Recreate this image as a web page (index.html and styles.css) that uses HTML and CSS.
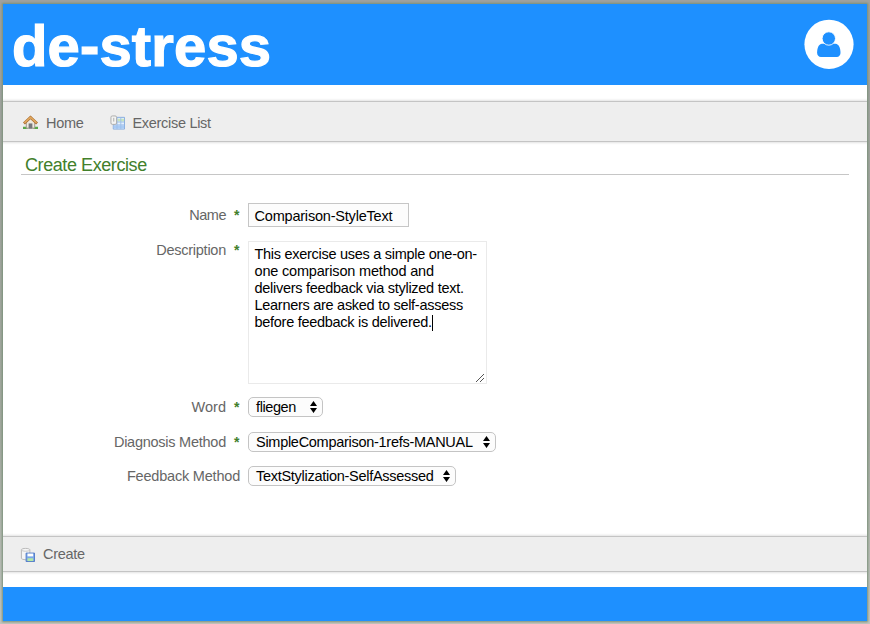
FILE: index.html
```html
<!DOCTYPE html>
<html lang="en">
<head>
<meta charset="utf-8">
<title>de-stress</title>
<link rel="stylesheet" href="styles.css">
</head>
<body>
<div class="page">
  <header class="banner">
    <h1 class="brand">de-stress</h1>
    <svg class="avatar" viewBox="0 0 50 50"><circle cx="25" cy="25.300" r="24.600" fill="#fff"/><path fill="#1e90ff" d="M18 24.700h13.500c3.500.3 5 4.500 5 9.300 0 2.300-1.600 4-3.700 4H16.900c-2.200 0-3.800-1.700-3.800-4 0-4.800 1.400-9 4.900-9.300z"/><circle cx="24.800" cy="19.500" r="6.700" fill="#1e90ff" stroke="#fff" stroke-width=".9"/></svg>
  </header>
  <nav class="bar">
    <a class="item home"><svg class="icon" viewBox="0 0 16 16"><path fill="#55a848" d="M0 12.500h5V15H0zM11 12.500h5V15h-5z"/><path fill="#eee9df" stroke="#9c9488" d="M3.500 8L8 4l4.500 4v6h-9z"/><path fill="#77777b" d="M6 9h4v5.500H6z"/><path fill="none" stroke="#a86a2c" stroke-width="3" d="M1 9l7-6.500L15 9"/><path fill="none" stroke="#e0a75e" stroke-width="1.800" d="M1.500 8.500L8 2.500l6.500 6"/></svg><span>Home</span></a>
    <a class="item list"><svg class="icon" viewBox="0 0 16 16"><path fill="#e5f0ff" stroke="#82aadd" d="M3.500 2.500h12v12.500h-12z"/><path fill="#a9cbf5" d="M4 11h11v3.500H4z"/><path fill="#c9e5bd" d="M8 4h7v3H8z"/><path stroke="#9dbfe9" d="M4 7.500h11M4 10.500h11M7.500 3v12M11.500 3v12"/><rect x="1" y="1" width="6" height="9" rx="1.500" fill="#f4f4f2" stroke="#aaa"/><path stroke="#aaa" d="M4 3v4"/></svg><span>Exercise List</span></a>
  </nav>
  <main class="content">
    <h2 class="heading"><span>Create Exercise</span></h2>
    <form class="form">
      <div class="row name"><label><span class="l1">Name</span><b>*</b></label><div class="input"><span>Comparison-StyleText</span></div></div>
      <div class="row desc"><label><span class="l2">Description</span><b>*</b></label><div class="area"><span class="t1">This exercise uses a simple one-on-</span><br><span class="t2">one comparison method and</span><br><span class="t3">delivers feedback via stylized text.</span><br><span class="t4">Learners are asked to self-assess</span><br><span class="t5">before feedback is delivered.</span><i class="caret"></i><svg class="grip" viewBox="0 0 8 8"><path stroke="#555" d="M0 8L8 0M4 8l4-4"/></svg></div></div>
      <div class="row word"><label><span class="l3">Word</span><b>*</b></label><div class="select s1"><span>fliegen</span><svg class="arrows" viewBox="0 0 7 12"><path d="M3.500 0L7 5H0zM0 7h7l-3.500 5z"/></svg></div></div>
      <div class="row diagnosis"><label><span class="l4">Diagnosis Method</span><b>*</b></label><div class="select s2"><span>SimpleComparison-1refs-MANUAL</span><svg class="arrows" viewBox="0 0 7 12"><path d="M3.500 0L7 5H0zM0 7h7l-3.500 5z"/></svg></div></div>
      <div class="row feedback"><label><span class="l5">Feedback Method</span></label><div class="select s3"><span>TextStylization-SelfAssessed</span><svg class="arrows" viewBox="0 0 7 12"><path d="M3.500 0L7 5H0zM0 7h7l-3.500 5z"/></svg></div></div>
    </form>
  </main>
  <div class="bar actions">
    <a class="item create"><svg class="icon" viewBox="0 0 16 16"><path fill="#f5f5f5" stroke="#b5b5b5" d="M1.500 3c0-2 9-2 9 0v9c0 2-9 2-9 0z"/><path fill="none" stroke="#c5c5c5" d="M1.500 3c0 2 9 2 9 0"/><path fill="#7ba6e8" stroke="#4f79c5" d="M6.500 6.500h9v9h-9z"/><path fill="#fff" d="M8 7h6v3H8z"/><path fill="#b5e8a5" d="M8 12h6v3H8z"/></svg><span>Create</span></a>
  </div>
  <footer class="footer"></footer>
</div>
</body>
</html>
```
FILE: styles.css
```css
* { box-sizing: border-box; }
body { margin: 0; height: 624px; overflow: hidden; padding: 4px 3px 3px; background: linear-gradient(#a0a19f, #a3a9a0 70%, #c2c5c0); font: 14.5px/17px "Liberation Sans", Arial, sans-serif; color: #666; }
.page { height: 617px; background: #fff; box-shadow: 0 0 2px 1px #799078; }
.banner { height: 81px; background: #1e90ff; display: flex; justify-content: space-between; padding: 15px 13px 0 9px; }
.brand { margin: 0; color: #fff; font-size: 58px; line-height: 54px; letter-spacing: .15px; -webkit-text-stroke: 1.2px #fff; }
.avatar { width: 50px; height: 50px; }
.bar { height: 41px; margin-top: 16px; background: #eee; border: solid #c4c4c4; border-width: 1px 0; box-shadow: 0 0 2px 1px #e2e2e2; clip-path: inset(-3px 0); display: flex; align-items: center; padding: 3px 19px 0; gap: 27px; }
.item { display: flex; align-items: center; gap: 8px; letter-spacing: -.3px; }
.icon { width: 15px; height: 15px; margin-bottom: 2px; }
.home .icon { margin-left: 1px; }
.list { gap: 7px; }
.content { height: 394px; padding: 13px 18px 0; }
.heading { margin: 0; height: 20px; border-bottom: 1px solid #c6c6c6; color: #42802b; font-size: 18px; font-weight: 400; line-height: 21px; padding-left: 4px; letter-spacing: -.42px; }
.form { padding-top: 28px; }
.row { display: flex; align-items: flex-start; }
label { width: 227px; padding-right: 8px; display: flex; justify-content: flex-end; gap: 8px; line-height: 19px; letter-spacing: -.25px; }
label b { color: #42802b; width: 6px; font-size: 14px; }
.name { height: 38px; }
.name label { padding-top: 3px; }
.l1 { letter-spacing: -.5px; }
.l3 { letter-spacing: 0; }
.l5 { letter-spacing: -.2px; }
.input { width: 161px; height: 24px; border: 1px solid #c6c6c6; background: #fcfcfc; color: #000; padding: 4px 5.5px; letter-spacing: -.2px; }
.desc { height: 156px; }
.area { position: relative; width: 239px; height: 143px; border: 1px solid #eaeaea; color: #000; padding: 4px 5.5px; white-space: nowrap; letter-spacing: -.28px; }
.t2 { letter-spacing: -.18px; }
.caret { display: inline-block; width: 1px; height: 16px; background: #000; vertical-align: -4px; }
.grip { position: absolute; right: 2px; bottom: 1px; width: 8px; height: 8px; }
.word, .diagnosis { height: 35px; }
.diagnosis { height: 34px; }
.word label, .diagnosis label, .feedback label { padding-top: 1px; }
.select { height: 20px; border: 1px solid #c4c4c4; border-radius: 5px; background: #fcfcfc; color: #000; display: flex; align-items: center; justify-content: space-between; padding: 0 5px 0 7px; white-space: nowrap; letter-spacing: -.28px; }
.arrows { width: 7px; height: 12px; flex: none; }
.s1 { width: 75px; letter-spacing: -.4px; }
.s2 { width: 248px; }
.s3 { width: 208px; }
.actions { height: 36px; margin-top: 0; padding: 0 17px; }
.actions .icon { margin-bottom: 0; }
.footer { height: 34px; margin-top: 15px; background: #1e90ff; }
```
